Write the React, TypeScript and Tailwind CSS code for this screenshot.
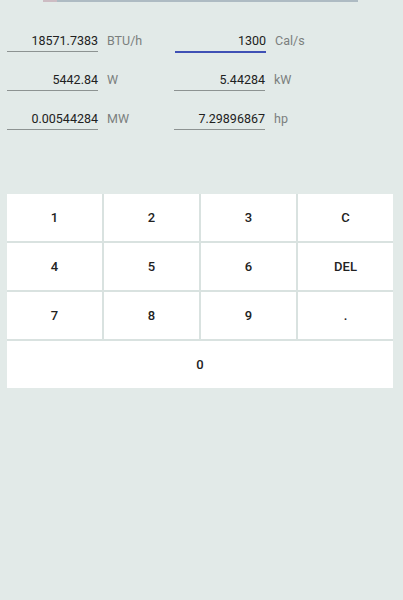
import React from 'react';

const fields = [
  [
    { value: '18571.7383', unit: 'BTU/h' },
    { value: '1300', unit: 'Cal/s', active: true },
  ],
  [
    { value: '5442.84', unit: 'W' },
    { value: '5.44284', unit: 'kW' },
  ],
  [
    { value: '0.00544284', unit: 'MW' },
    { value: '7.29896867', unit: 'hp' },
  ],
];

const keys = ['1', '2', '3', 'C', '4', '5', '6', 'DEL', '7', '8', '9', '.'];

function Field({ value, unit, active }: { value: string; unit: string; active?: boolean }) {
  return (
    <div className="flex items-start w-[167px]">
      <div
        className={
          active
            ? 'w-[91px] ml-[1px] pb-[2px] text-right text-[12.5px] leading-[16px] text-[#212121] border-b-2 border-[#3f51b5]'
            : 'w-[91px] pb-[2px] text-right text-[12.5px] leading-[16px] text-[#212121] border-b border-[#8d9392]'
        }
      >
        {value}
      </div>
      <span className="ml-[9px] text-[12.5px] leading-[16px] text-[#7b7f7e]">{unit}</span>
    </div>
  );
}

export default function App() {
  return (
    <div className="h-[600px] w-full bg-[#e2eae8] overflow-hidden font-['Roboto','Noto_Sans',sans-serif]">
      {/* spinner remnant at the top */}
      <div className="flex ml-[43px] w-[315px] h-[1.5px]">
        <div className="w-[14px] bg-[#cdbcc3]" />
        <div className="flex-1 bg-[#aebbc3]" />
      </div>

      {/* converter fields */}
      <div className="flex flex-col gap-[20px] px-[7px] pt-[31.5px]">
        {fields.map((row, i) => (
          <div key={i} className="flex items-start h-[19px]">
            {row.map((f) => (
              <Field key={f.unit} {...f} />
            ))}
          </div>
        ))}
      </div>

      {/* keypad */}
      <div className="ml-[7px] mt-[64px] w-[386px] grid grid-cols-4 gap-[2px] bg-[#d9e2e0]">
        {keys.map((k) => (
          <button
            key={k}
            className="h-[47px] bg-white text-[13px] font-medium text-[#222222]"
          >
            {k}
          </button>
        ))}
        <button className="col-span-4 h-[47px] bg-white text-[13px] font-medium text-[#222222]">
          0
        </button>
      </div>
    </div>
  );
}
